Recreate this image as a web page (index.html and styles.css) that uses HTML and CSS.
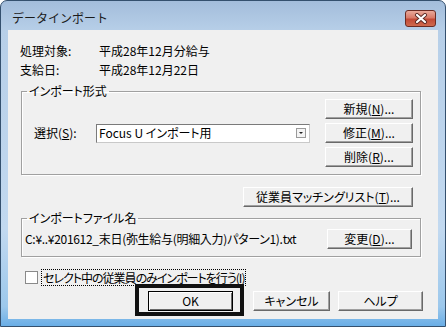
FILE: index.html
```html
<!DOCTYPE html>
<html lang="ja">
<head>
  <meta charset="UTF-8">
  <title>データインポート</title>
  <link rel="stylesheet" href="styles.css">
</head>
<body>
  <div class="window">
    <div class="titlebar">
      <span class="title">データインポート</span>
      <span class="close">
        <svg width="14" height="11" viewBox="0 0 14 11">
          <path d="M3 2 L11 9 M11 2 L3 9" stroke="#5a2a24" stroke-width="4" stroke-linecap="round"/>
          <path d="M3 2 L11 9 M11 2 L3 9" stroke="#fff" stroke-width="2.2" stroke-linecap="round"/>
        </svg>
      </span>
    </div>

    <div class="client">
      <div class="info">
        <span>処理対象:</span><span>平成28年12月分給与</span>
        <span>支給日:</span><span>平成28年12月22日</span>
      </div>

      <fieldset class="group group-format">
        <legend>インポート形式</legend>
        <div class="format-row">
          <span class="select-label">選択(<u>S</u>):</span>
          <div class="combo">
            <span class="combo-text">Focus U インポート用</span>
            <span class="combo-btn"></span>
          </div>
          <div class="btn-col">
            <button class="btn">新規(<u>N</u>)...</button>
            <button class="btn">修正(<u>M</u>)...</button>
            <button class="btn">削除(<u>R</u>)...</button>
          </div>
        </div>
      </fieldset>

      <div class="match-row">
        <button class="btn btn-match">従業員マッチングリスト(<u>T</u>)...</button>
      </div>

      <fieldset class="group group-file">
        <legend>インポートファイル名</legend>
        <div class="file-row">
          <span class="file-path">C:¥..¥201612_末日(弥生給与(明細入力)パターン1).txt</span>
          <button class="btn btn-change">変更(<u>D</u>)...</button>
        </div>
      </fieldset>

      <div class="check-row">
        <span class="checkbox"></span>
        <span class="check-label">セレクト中の従業員のみインポートを行う(<u>I</u>)</span>
      </div>

      <div class="action-row">
        <button class="btn btn-ok">OK</button>
        <button class="btn btn-cancel">キャンセル</button>
        <button class="btn btn-help">ヘルプ</button>
      </div>
    </div>
  </div>
</body>
</html>
```

FILE: styles.css
```css
body {
  margin: 0;
  font-family: "Noto Sans CJK JP", "Noto Sans", sans-serif;
  font-size: 12px;
  font-feature-settings: "palt";
  color: #000;
  background: #fff;
}

/* Window frame */
.window {
  width: 446px;
  height: 327px;
  box-sizing: border-box;
  border: 1px solid #34506e;
  border-radius: 7px 7px 0 0;
  padding: 0 7px 7px 7px;
  background: linear-gradient(to bottom, #a3bddb 0, #b7cfe8 30px, #c2d9f0 70%, #9cc8ec 94%, #6aaee6 100%);
}

.titlebar {
  height: 29px;
  box-sizing: border-box;
  padding-top: 5px;
  display: flex;
  align-items: center;
  justify-content: space-between;
}

.title {
  margin-left: 4px;
  font-size: 12px;
  line-height: 16px;
  font-feature-settings: normal;
  color: #1b1b1b;
}

.close {
  width: 31px;
  height: 17px;
  margin-right: 2px;
  box-sizing: border-box;
  display: flex;
  align-items: center;
  justify-content: center;
  border: 1px solid #6b2b22;
  border-radius: 3px;
  background: linear-gradient(to bottom, #e9a99a 0, #d97a68 45%, #c24a36 55%, #cf6a4e 100%);
}

/* Client area */
.client {
  height: 289px;
  box-sizing: border-box;
  background: #f0f0f0;
  padding-top: 11px;
  padding-left: 12px;
}

.info {
  display: grid;
  grid-template-columns: 79px auto;
  line-height: 19px;
}

/* Group boxes */
.group {
  width: 400px;
  box-sizing: border-box;
  margin: 0 0 0 1px;
  padding: 0;
  border: 1px solid #a0a0a0;
  box-shadow: inset 1px 1px 0 #fff, 1px 1px 0 #fff;
}

.group legend {
  margin-left: 5px;
  padding: 0 2px;
  line-height: 16px;
}

.group-format {
  margin-top: 4px;
}

.format-row {
  display: flex;
  align-items: center;
  padding: 0 7px 7px 12px;
}

.select-label {
  width: 62px;
  line-height: 16px;
}

.combo {
  width: 214px;
  height: 19px;
  box-sizing: border-box;
  display: flex;
  align-items: center;
  background: #fff;
  border: 1px solid;
  border-color: #7a7a7a #c9c9c9 #c9c9c9 #7a7a7a;
}

.combo-text {
  flex: 1;
  padding-left: 2px;
  line-height: 16px;
  white-space: nowrap;
}

.combo-btn {
  width: 10px;
  height: 10px;
  margin-right: 3px;
  box-sizing: border-box;
  border: 1px solid #9a9a9a;
  background: #f4f4f4;
  position: relative;
}

.combo-btn::after {
  content: '';
  position: absolute;
  left: 2px;
  top: 3px;
  border-left: 2px solid transparent;
  border-right: 2px solid transparent;
  border-top: 2px solid #222;
}

.btn-col {
  margin-left: auto;
  display: flex;
  flex-direction: column;
  gap: 4px;
}

/* Buttons */
.btn {
  height: 20px;
  width: 88px;
  box-sizing: border-box;
  padding: 0;
  font-family: inherit;
  font-size: 12px;
  font-feature-settings: "palt";
  line-height: 16px;
  color: #000;
  background: #f0f0f0;
  border: 1px solid;
  border-color: #fff #696969 #696969 #fff;
  box-shadow: inset -1px -1px 0 #a0a0a0;
}

.match-row {
  display: flex;
  justify-content: flex-end;
  margin: 12px 25px 0 0;
}

.btn-match {
  width: 170px;
}

.group-file {
  margin-top: 3px;
}

.file-row {
  display: flex;
  align-items: center;
  padding: 3px 8px 7px 3px;
}

.file-path {
  white-space: nowrap;
  line-height: 16px;
  letter-spacing: -0.3px;
}

.btn-change {
  width: 85px;
  margin-left: auto;
}

/* Checkbox */
.check-row {
  display: flex;
  align-items: center;
  margin-top: 12px;
  padding-left: 5px;
  height: 17px;
}

.checkbox {
  width: 13px;
  height: 13px;
  box-sizing: border-box;
  background: #fff;
  border: 1px solid #8a8a8a;
}

.check-label {
  margin-left: 3px;
  padding: 0 1px;
  line-height: 15px;
  border: 1px dotted #000;
  letter-spacing: -1px;
}

/* Dialog buttons */
.action-row {
  display: flex;
  margin-top: 5px;
  padding-left: 128px;
}

.btn-ok {
  width: 85px;
  position: relative;
  border: 1px solid #000;
  box-shadow: inset 1px 1px 0 #fff, inset -1px -1px 0 #696969;
}

/* highlight frame drawn over the OK button */
.btn-ok::after {
  content: '';
  position: absolute;
  top: -8px;
  bottom: -6px;
  left: -14px;
  right: -12px;
  border: 4px solid #111;
}

.btn-cancel {
  width: 77px;
  margin-left: 20px;
}

.btn-help {
  width: 85px;
  margin-left: 8px;
}
```
